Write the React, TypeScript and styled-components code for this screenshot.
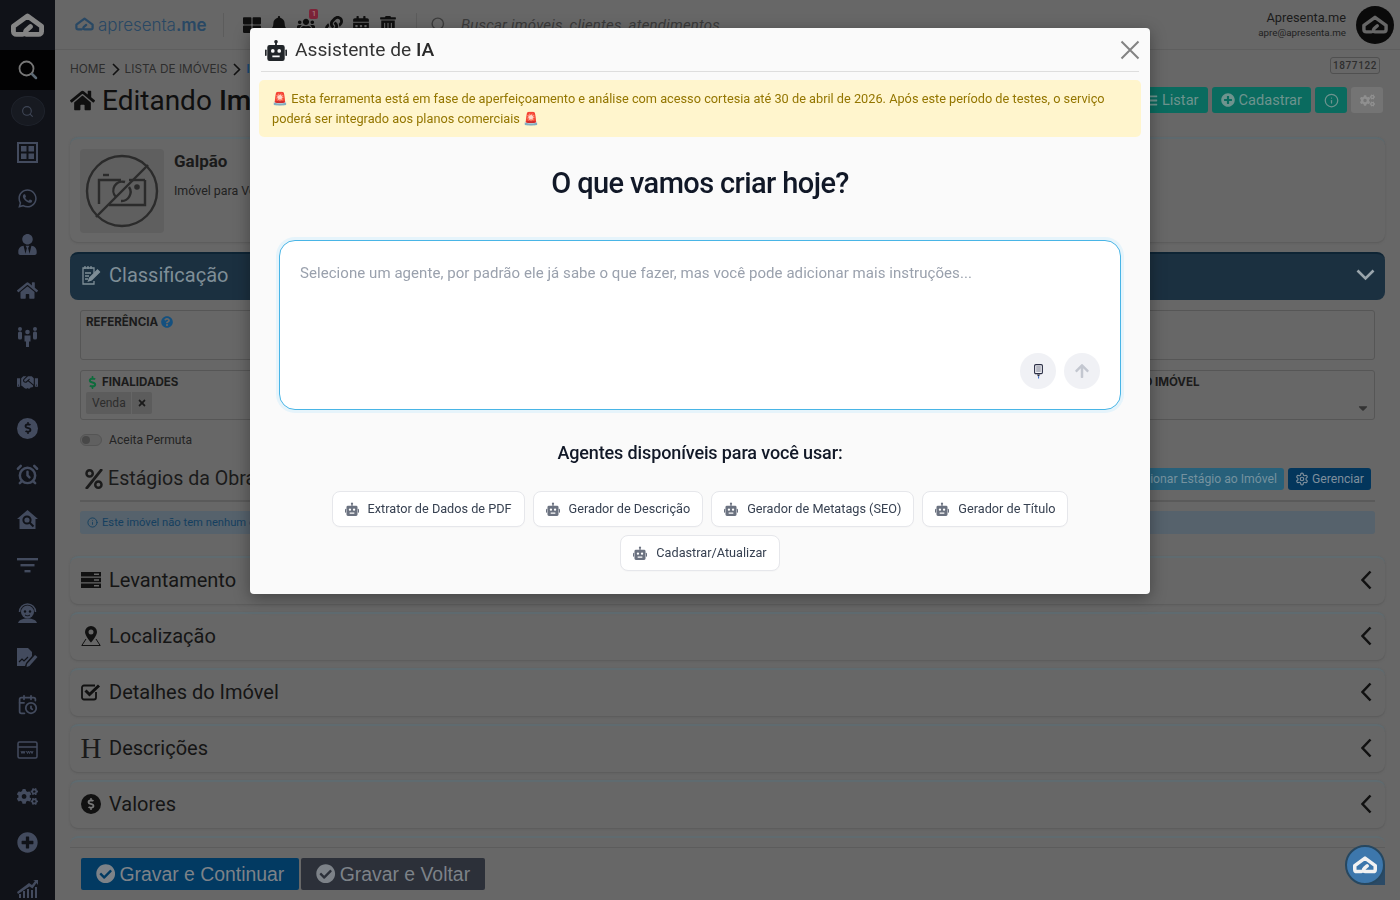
import React from "react";
import styled, { createGlobalStyle } from "styled-components";
import {
  FaHome, FaWhatsapp, FaUserTie, FaHandshake, FaCogs, FaPlusCircle,
  FaBell, FaLink, FaCalendarAlt, FaTrashAlt, FaThLarge, FaUsers, FaCheckCircle,
  FaQuestionCircle, FaDollarSign, FaPercent, FaBars, FaTimes, FaArrowUp, FaCaretDown,
} from "react-icons/fa";
import { LuCalendarClock, LuInfo, LuSettings, LuSearch, LuAlarmClock } from "react-icons/lu";

const Global = createGlobalStyle`
  html, body { margin: 0; padding: 0; height: 900px; overflow: hidden; background: #676767; }
  body { font-family: "Roboto", "Liberation Sans", sans-serif; color: #151515; }
  * { box-sizing: border-box; }
`;

const Shell = styled.div`display: flex; width: 1400px; height: 900px; overflow: hidden;`;

const Sidebar = styled.nav`
  width: 55px; flex: none; height: 900px; overflow: hidden; background: #101218; display: flex; flex-direction: column; align-items: center;
  color: #434b5e;
`;
const SideLogo = styled.div`height: 50px; width: 100%; flex: none; display: flex; align-items: center; justify-content: center; color: #858585;`;
const SideActive = styled.div`height: 40px; width: 100%; flex: none; background: #020203; display: flex; align-items: center; justify-content: center; color: #777;`;
const SideSearch = styled.div`
  width: 34px; height: 30px; flex: none; margin: 6px 0 3px; border-radius: 50%; background: #171a21; border: 1px solid #1f232c;
  display: flex; align-items: center; justify-content: center; color: #3f4656;
`;
const SideItem = styled.div`height: 46px; width: 100%; flex: none; display: flex; align-items: center; justify-content: center; font-size: 21px;`;
const CoinIcon = styled.span<{ $bg: string; $fg: string; $size: number }>`
  width: ${p => p.$size}px; height: ${p => p.$size}px; border-radius: 50%; background: ${p => p.$bg}; color: ${p => p.$fg};
  display: inline-flex; align-items: center; justify-content: center; font-size: ${p => Math.round(p.$size * 0.58)}px; flex: none;
`;

const Main = styled.div`flex: 1; min-width: 0; display: flex; flex-direction: column;`;
const TopBar = styled.header`
  height: 50px; flex: none; display: flex; align-items: center; border-bottom: 1px solid #5e5e5e; padding: 0 6px 0 20px;
`;
const BrandMark = styled.div`display: flex; align-items: center; gap: 4px; color: #294864; width: 148px;`;
const BrandText = styled.span`font-family: "Inter", sans-serif; font-size: 17px; font-weight: 300; letter-spacing: -0.06px;`;
const BrandStrong = styled.b`font-weight: 600;`;
const Divider = styled.span`width: 1px; height: 24px; background: #5c5c5c; flex: none;`;
const TopIcons = styled.div`display: flex; align-items: center; gap: 9.2px; margin: 0 19px; color: #101010; font-size: 18px;`;
const TopIcon = styled.span`position: relative; display: flex; width: 18px; justify-content: center;`;
const TopBadge = styled.span`
  position: absolute; top: -7px; right: -3px; width: 9px; height: 10px; border-radius: 2px; background: #7c2338; color: #a88;
  font-size: 8px; line-height: 10px; text-align: center;
`;
const SearchText = styled.span`font-size: 15px; font-style: italic; color: #3a3a3a; margin-left: 14px; letter-spacing: .2px;`;
const SearchGlyph = styled.span`display: flex; color: #3c3c3c; margin-left: 13px;`;
const Spacer = styled.div`flex: 1;`;
const UserBox = styled.div`text-align: right; margin-right: 10px;`;
const UserName = styled.div`font-size: 12.8px; line-height: 16px; color: #1b1b1b;`;
const UserMail = styled.div`font-size: 9.8px; line-height: 14px; color: #1f1f1f;`;
const Avatar = styled.div`width: 38px; height: 38px; border-radius: 50%; background: #0a0a0a; color: #666; display: flex; align-items: center; justify-content: center;`;

const Content = styled.div`padding: 9px 15px 0; display: flex; flex-direction: column;`;
const CrumbRow = styled.div`display: flex; align-items: center; height: 20px; padding-right: 5px;`;
const Crumb = styled.span<{ $on?: boolean }>`
  font-family: "Inter", sans-serif; font-size: 11.8px; color: ${p => (p.$on ? "#184c78" : "#2d2d2d")}; font-weight: ${p => (p.$on ? 700 : 400)};
  text-transform: uppercase; margin-right: 6px;
`;
const CrumbSep = styled.span`display: flex; color: #111; margin-right: 5px;`;
const CodeTag = styled.span`
  margin: 0 0 8px auto; border: 1px solid #505050; border-radius: 3px; height: 17px; width: 50px; text-align: center; line-height: 15px;
  font-size: 10px; font-weight: 500; color: #2e2e2e; letter-spacing: .6px;
`;
const TitleRow = styled.div`display: flex; align-items: center; height: 36px; margin-top: 3px; padding-right: 2px;`;
const PageTitle = styled.h1`
  margin: 0; display: flex; align-items: center; gap: 7px; font-size: 28px; font-weight: 400; color: #0f0f0f;
  & b { font-weight: 500; }
`;
const ActionGroup = styled.div`margin-left: auto; display: flex; gap: 4px;`;
const ActionBtn = styled.span<{ $bg?: string; $fg?: string; $square?: boolean }>`
  height: 26px; padding: ${p => (p.$square ? "0" : "0 9px")}; width: ${p => (p.$square ? "32px" : "auto")}; justify-content: center;
  border-radius: 3px; background: ${p => p.$bg ?? "#0a6b5f"}; color: ${p => p.$fg ?? "#6e938e"};
  font-size: 14.6px; display: inline-flex; align-items: center; gap: 4px;
`;

const Summary = styled.section`
  margin-top: 19px; height: 105px; flex: none; border-radius: 8px; background: #676767; border-top: 2px solid #5d696e;
  box-shadow: 0 1px 2px #5a5a5a; padding: 10px; display: flex; gap: 10px;
`;
const Photo = styled.div`width: 84px; height: 84px; border-radius: 4px; background: #5f5f5f; color: #2b2b2b; display: flex; align-items: center; justify-content: center;`;
const SummaryName = styled.div`font-size: 17px; font-weight: 700; color: #1a1a1a; margin-top: 2px;`;
const SummarySub = styled.div`font-size: 12.4px; color: #222; margin-top: 12px;`;

const ClassHead = styled.div`
  margin-top: 10px; height: 48px; flex: none; border-radius: 8px; background: #1b3040; border-top: 2px solid #0e2434;
  display: flex; align-items: center; padding: 0 10px 4px 11px; color: #7f8e97; font-size: 20px; gap: 8px;
`;
const HeadChevron = styled.span<{ $fg?: string }>`margin-left: auto; display: flex; color: ${p => p.$fg ?? "#9aa5ac"};`;

const Panel = styled.div`padding: 10px 10px 0; display: flex; flex-direction: column;`;
const Field = styled.div<{ $h?: number }>`
  height: ${p => p.$h ?? 50}px; border: 1px solid #565656; border-radius: 3px; padding: 4px 5px; position: relative;
`;
const FieldRow = styled.div`display: grid; grid-template-columns: 1fr 316px; gap: 10px; margin-top: 10px;`;
const FieldLabel = styled.label`
  font-family: "Inter", sans-serif; font-size: 11.6px; font-weight: 700; color: #1b1b1b; display: flex; align-items: center; gap: 3px; letter-spacing: -.05px;
`;
const Caret = styled.span`position: absolute; right: 4px; bottom: 4px; color: #333; font-size: 14px; display: flex;`;
const Chip = styled.span`
  display: inline-flex; align-items: center; margin-top: 3px; height: 22px; border-radius: 2px; background: #5c5c5c; color: #2c2c2c; font-size: 12px; padding-left: 6px;
`;
const ChipX = styled.span`display: flex; align-items: center; height: 100%; margin-left: 5px; padding: 0 5px; border-left: 1px solid #666; color: #1a1a1a; font-size: 10px;`;
const ToggleRow = styled.div`display: flex; align-items: center; gap: 7px; margin-top: 13px; font-size: 12.1px; color: #232323; height: 14px;`;
const ToggleTrack = styled.span`width: 22px; height: 12px; border: 1px solid #555; border-radius: 7px; background: #606060; padding: 1px;`;
const ToggleKnob = styled.span`display: block; width: 8px; height: 8px; border-radius: 50%; background: #484848;`;
const StageHead = styled.div`
  margin-top: 18px; height: 37px; border-bottom: 2px solid #5a5a5a; display: flex; align-items: center; gap: 4px; font-size: 19.6px; color: #1b1b1b; padding: 0 4px 8px;
`;
const StageBtn = styled.span<{ $bg: string; $fg: string; $ml?: string }>`
  height: 22px; margin-top: 1px; border-radius: 3px; background: ${p => p.$bg}; color: ${p => p.$fg}; font-size: 12.2px; padding: 0 7px;
  display: inline-flex; align-items: center; gap: 3px; margin-left: ${p => p.$ml ?? "0"};
`;
const StageNote = styled.div`
  margin-top: 9px; height: 23px; border-radius: 3px; background: #56626c; color: #153f5f; font-size: 11.2px; display: flex; align-items: center; gap: 4px; padding: 0 7px 1px;
`;
const Accordion = styled.div`margin-top: 22px; display: flex; flex-direction: column; gap: 8px;`;
const AccRow = styled.div`
  height: 48px; flex: none; border-radius: 8px; border-top: 2px solid #5f6b70; box-shadow: 0 1px 2px #5a5a5a; background: #676767;
  display: flex; align-items: center; gap: 8px; padding: 0 13px 3px 11px; font-size: 20px; color: #151515;
`;
const AccIcon = styled.span`width: 20px; display: flex; justify-content: center; color: #111;`;
const SerifH = styled.span`font-family: "Liberation Serif", serif; font-size: 29px; line-height: 20px; color: #1a1a1a;`;
const Footer = styled.div`
  margin-top: 8px; height: 80px; flex: none; border-radius: 8px; border-top: 2px solid #5f6b70; padding-top: 9px;
`;
const FooterInner = styled.div`border-top: 1px solid #5c5c5c; height: 70px; padding: 10px 11px; display: flex; gap: 2px;`;
const SaveBtn = styled.span<{ $bg: string }>`
  height: 32px; border-radius: 2px; background: ${p => p.$bg}; color: #7d8288; font-family: "Liberation Sans", sans-serif; font-size: 19.4px;
  padding: 0 15px; display: inline-flex; align-items: center; gap: 4px;
`;
const Floating = styled.div`
  position: fixed; left: 1345px; top: 845px; width: 40px; height: 40px; border-radius: 50%; background: #3d77ac; border: 2px solid #264760; color: #f2f2f2;
  display: flex; align-items: center; justify-content: center;
`;
const FloatingCorner = styled.div`position: fixed; left: 1365px; top: 865px; width: 20px; height: 20px; background: #2a4a66;`;

const Backdrop = styled.div`position: fixed; inset: 0; display: flex; justify-content: center; align-items: flex-start; padding-top: 28px;`;
const Modal = styled.div`
  width: 900px; height: 566px; background: #fafafa; border-radius: 4px; box-shadow: 0 4px 16px rgba(0,0,0,.35); padding: 0 9px; display: flex; flex-direction: column;
`;
const ModalHead = styled.div`
  height: 44px; margin: 0 2px; border-bottom: 1px solid #dedede; display: flex; align-items: center; gap: 8px; padding: 0 0 0 4px;
  font-size: 19.2px; color: #333; flex: none;
  & b { font-weight: 500; color: #2a2a2a; }
`;
const RobotTitle = styled.span`display: flex; color: #212529;`;
const CloseBtn = styled.span`margin-left: auto; display: flex; color: #838383; margin-right: -1px;`;
const Alert = styled.div`
  margin-top: 8px; height: 57px; background: #fff5cd; border-radius: 5px; color: #947600; font-size: 12.75px; line-height: 20px; padding: 9px 13px; flex: none;
`;
const Heading = styled.h2`
  margin: 27px 0 0; text-align: center; font-size: 29px; line-height: 38px; font-weight: 500; color: #111827; letter-spacing: -.6px;
`;
const Composer = styled.div`
  margin: 38px 20px 0; height: 170px; border: 1px solid #49b5e6; border-radius: 16px; background: #fff; box-shadow: 0 0 0 3px #e6f4fb; position: relative; flex: none;
`;
const Prompt = styled.textarea`
  display: block; width: 100%; height: 100%; border: 0; outline: 0; resize: none; background: transparent; padding: 22px 20px;
  font-family: "Roboto", sans-serif; font-size: 15px; line-height: 20px; border-radius: 16px; letter-spacing: .06px;
  &::placeholder { color: #9aa1ad; opacity: 1; }
`;
const ComposerTools = styled.div`position: absolute; right: 20px; bottom: 20px; display: flex; gap: 8px;`;
const RoundBtn = styled.span<{ $fg: string }>`
  width: 36px; height: 36px; border-radius: 50%; background: #f0f1f5; color: ${p => p.$fg}; display: flex; align-items: center; justify-content: center; font-size: 16px;
`;
const Subheading = styled.h3`margin: 32px 0 0; text-align: center; font-size: 18px; line-height: 22px; font-weight: 500; color: #111827; letter-spacing: -.13px;`;
const AgentList = styled.div`margin: 27px 60px 0; display: flex; flex-wrap: wrap; justify-content: center; gap: 8px;`;
const AgentBtn = styled.button`
  height: 36px; padding: 0 12px; background: #fff; border: 1px solid #e6e7eb; border-radius: 8px; display: inline-flex; align-items: center; gap: 9px;
  font-family: "Roboto", sans-serif; font-size: 12.7px; color: #374151; box-shadow: 0 1px 1px rgba(0,0,0,.02);
  & svg { color: #6b7280; }
`;
const AgentLabel = styled.span`position: relative; top: -1px;`;

const Robot = ({ size }: { size: number }) => (
  <svg width={size} height={size} viewBox="0 0 24 24" fill="currentColor">
    <path fillRule="evenodd" d="M12 1a2 2 0 0 1 1 3.700V6.500h6A2.500 2.500 0 0 1 21.500 9v12.500A2.500 2.500 0 0 1 19 24H5a2.500 2.500 0 0 1-2.500-2.500V9A2.500 2.500 0 0 1 5 6.500h6V4.700A2 2 0 0 1 12 1zM8.500 11a2 2 0 1 0 0 4 2 2 0 0 0 0-4zm7 0a2 2 0 1 0 0 4 2 2 0 0 0 0-4zM8 18v2h8v-2z" />
    <rect x="0" y="11.500" width="1.800" height="7" rx=".8" /><rect x="22.200" y="11.500" width="1.800" height="7" rx=".8" />
  </svg>
);
const Logo = ({ size, stroke = 5 }: { size: number; stroke?: number }) => (
  <svg width={size} height={size * 0.74} viewBox="0 0 34 25" fill="none" stroke="currentColor" strokeWidth={stroke} strokeLinejoin="round" strokeLinecap="round">
    <path d="M12 22H5.500a3 3 0 0 1-3-3v-5.500L17 3l14.500 10.500V19a3 3 0 0 1-3 3H17c-2 0-3-2.500-1-4.500l4-3.500" />
  </svg>
);
const SearchOutline = () => (
  <svg width="20" height="20" viewBox="0 0 20 20" fill="none"><circle cx="8.500" cy="8.500" r="7" stroke="#777" strokeWidth="1.800" /><path d="M14 14l4 4" stroke="#5d6a75" strokeWidth="2.500" strokeLinecap="round" /></svg>
);
const FilterGlyph = () => (
  <svg width="21" height="16" viewBox="0 0 21 16" fill="currentColor"><rect width="21" height="2.400" /><rect x="3.500" y="6" width="14" height="2.400" /><rect x="7.500" y="12" width="6" height="2.400" /></svg>
);
const WebGlyph = () => (
  <svg width="21" height="18" viewBox="0 0 21 18" fill="none" stroke="currentColor" strokeWidth="1.500"><rect x="1" y="1" width="19" height="16" rx="1.500" /><path d="M1 6h19" /><path d="M4 10l1 2.500 1-2.500 1 2.500 1-2.500M9.500 10l1 2.500 1-2.500 1 2.500 1-2.500M14 10l1 2.500 1-2.500" strokeWidth="1" /></svg>
);
const HomeSearch = () => (
  <svg width="21" height="20" viewBox="0 0 21 20"><path fill="currentColor" d="M10.500 0L21 9h-2.500v10h-16V9H0z" /><circle cx="10" cy="10" r="3.600" fill="none" stroke="#101218" strokeWidth="2" /><path d="M12.500 12.500l4 4" stroke="#101218" strokeWidth="2" /></svg>
);
const GridGlyph = () => (
  <svg width="21" height="21" viewBox="0 0 21 21" fill="none" stroke="currentColor" strokeWidth="2"><rect x="1" y="1" width="19" height="19" /><rect x="4" y="4" width="5.500" height="5.500" fill="currentColor" stroke="none" /><rect x="11.500" y="4" width="5.500" height="5.500" fill="currentColor" stroke="none" /><rect x="4" y="11.500" width="5.500" height="5.500" fill="currentColor" stroke="none" /><rect x="11.500" y="11.500" width="5.500" height="5.500" fill="currentColor" stroke="none" /></svg>
);
const PeopleGlyph = () => (
  <svg width="21" height="21" viewBox="0 0 21 21" fill="currentColor">
    <circle cx="3" cy="3" r="2" /><rect x="1" y="5.500" width="4" height="8" rx="1.500" /><circle cx="18" cy="3" r="2" /><rect x="16" y="5.500" width="4" height="8" rx="1.500" />
    <circle cx="10.500" cy="6" r="2.300" /><path d="M7.500 9.500h6v6h-1.500v5.500h-3v-5.500H7.500z" />
  </svg>
);
const HeadsetFace = () => (
  <svg width="21" height="21" viewBox="0 0 21 21"><path d="M2.500 10a8 8 0 0 1 16 0" fill="none" stroke="currentColor" strokeWidth="1.500" /><circle cx="10.500" cy="10" r="6.500" fill="currentColor" /><circle cx="8" cy="9.500" r="1.200" fill="#101218" /><circle cx="13" cy="9.500" r="1.200" fill="#101218" /><path d="M8 13c1.500 1 3.500 1 5 0" stroke="#101218" fill="none" /><path d="M1 21c1-3 4-4.500 9.500-4.500S19 18 20 21z" fill="currentColor" /></svg>
);
const ChartEdit = () => (
  <svg width="21" height="20" viewBox="0 0 21 20"><path fill="currentColor" d="M0 0h11l4 4v4l-6 7-1 3H0z" /><path d="M2 14l3-3 2 2 4-4" stroke="#101218" strokeWidth="1.200" fill="none" /><path d="M10 16l8-9 2.500 2-8 9-3 1z" fill="currentColor" /></svg>
);
const GrowthChart = () => (
  <svg width="21" height="19" viewBox="0 0 21 19" fill="currentColor"><path d="M0 13L12 4l3 2 3-4-2-1h5v5l-1.500-2-4 5.500-3-2L1 15z" /><rect x="2" y="15" width="2" height="4" /><rect x="6" y="12" width="2" height="7" /><rect x="10" y="10" width="2" height="9" /><rect x="14" y="11" width="2" height="8" /><rect x="18" y="8" width="2" height="11" /></svg>
);
const NoteGlyph = () => (
  <svg width="20" height="20" viewBox="0 0 20 20" fill="none" stroke="currentColor" strokeWidth="1.300"><path d="M13 8V3H2v16h11v-3" /><path d="M4 1v3M7 1v3M10 1v3" /><path d="M4 8h6M4 11h4M4 14h3" /><path d="M7.500 16l1-3 8-8 2 2-8 8z" fill="currentColor" /></svg>
);
const NoPhoto = () => (
  <svg width="74" height="74" viewBox="0 0 74 74" fill="none" stroke="currentColor" strokeWidth="2.400">
    <circle cx="37" cy="37" r="35" /><path d="M11 63L63 11" />
    <path d="M14 50V26h22M60 26v25H24" /><path d="M18 21h6" /><path d="M44 26h16" />
    <path d="M31 43a9 9 0 0 1 9-15M44 33a9 9 0 0 1-8 14" /><circle cx="52" cy="33" r="1.600" fill="currentColor" />
  </svg>
);
const ChevronDown = () => (
  <svg width="19" height="12" viewBox="0 0 19 12" fill="none" stroke="currentColor" strokeWidth="2.600"><path d="M1.500 1.500l8 8 8-8" /></svg>
);
const ChevronLeft = () => (
  <svg width="11" height="20" viewBox="0 0 11 20" fill="none" stroke="currentColor" strokeWidth="2.500"><path d="M9.500 1.500L1.500 10l8 8.500" /></svg>
);
const ChevronRight = () => (
  <svg width="8" height="13" viewBox="0 0 8 13" fill="none" stroke="currentColor" strokeWidth="1.600"><path d="M1 1l5.500 5.500L1 12" /></svg>
);
const Cross = () => (
  <svg width="20" height="20" viewBox="0 0 20 20" fill="none" stroke="currentColor" strokeWidth="2"><path d="M1.500 1.500l17 17M18.500 1.500l-17 17" /></svg>
);
const StackGlyph = () => (
  <svg width="20" height="16" viewBox="0 0 20 16" fill="currentColor" fillRule="evenodd"><path d="M0 0h20v4.500H0zM13 1.500v1.500h5V1.500zM0 5.700h20v4.500H0zM13 7.200v1.500h5V7.200zM0 11.500h20V16H0zM13 13v1.500h5V13z" /></svg>
);
const PinGlyph = () => (
  <svg width="20" height="20" viewBox="0 0 20 20"><path fillRule="evenodd" fill="currentColor" d="M10 0a6 6 0 0 1 6 6c0 4-6 10.500-6 10.500S4 10 4 6a6 6 0 0 1 6-6zm0 3.500a2.500 2.500 0 1 0 0 5 2.500 2.500 0 0 0 0-5z" /><path d="M5 13L.8 19.500h18.400L15 13" fill="none" stroke="currentColor" strokeWidth="1" /></svg>
);
const CheckBoxGlyph = () => (
  <svg width="20" height="18" viewBox="0 0 20 18" fill="none"><path d="M15 9v5.500a2 2 0 0 1-2 2H3a2 2 0 0 1-2-2v-10a2 2 0 0 1 2-2h11" stroke="currentColor" strokeWidth="1.800" /><path d="M4.500 7.500l4 4L18 2.500" stroke="currentColor" strokeWidth="3" /></svg>
);
const MicGlyph = () => (
  <svg width="9" height="15" viewBox="0 0 9 15"><rect x=".6" y=".6" width="7.800" height="9" rx="1.200" fill="#f4f4f8" stroke="#2b2f45" strokeWidth="1.100" /><path d="M2.200 3h4.600M2.200 5h4.600M2.200 7h4.600" stroke="#555a70" strokeWidth=".8" /><path d="M3 10.500h3l-1 2h-1z" fill="#2b2f45" /><rect x="4" y="12.500" width="1.100" height="2" fill="#3d6fd0" /></svg>
);

const sideIcons: React.ReactNode[] = [
  <GridGlyph />, <FaWhatsapp />, <FaUserTie />, <FaHome />, <PeopleGlyph />, <FaHandshake />,
  <CoinIcon $bg="#434b5e" $fg="#101218" $size={21}><FaDollarSign /></CoinIcon>,
  <LuAlarmClock size={23} strokeWidth={2.600} />, <HomeSearch />, <FilterGlyph />, <HeadsetFace />, <ChartEdit />, <LuCalendarClock />, <WebGlyph />, <FaCogs />, <FaPlusCircle />, <GrowthChart />,
];
const agents = ["Extrator de Dados de PDF", "Gerador de Descrição", "Gerador de Metatags (SEO)", "Gerador de Título", "Cadastrar/Atualizar"];
const sections: { label: string; icon: React.ReactNode }[] = [
  { label: "Levantamento", icon: <StackGlyph /> },
  { label: "Localização", icon: <PinGlyph /> },
  { label: "Detalhes do Imóvel", icon: <CheckBoxGlyph /> },
  { label: "Descrições", icon: <SerifH>H</SerifH> },
  { label: "Valores", icon: <CoinIcon $bg="#111" $fg="#777" $size={20}><FaDollarSign /></CoinIcon> },
];

export default function App() {
  return (
    <>
      <Global />
      <Shell>
        <Sidebar>
          <SideLogo><Logo size={33} /></SideLogo>
          <SideActive><SearchOutline /></SideActive>
          <SideSearch><LuSearch size={13} /></SideSearch>
          {sideIcons.map((icon, i) => <SideItem key={i}>{icon}</SideItem>)}
        </Sidebar>
        <Main>
          <TopBar>
            <BrandMark>
              <Logo size={19} stroke={4} />
              <BrandText>apresenta<BrandStrong>.me</BrandStrong></BrandText>
            </BrandMark>
            <Divider />
            <TopIcons>
              <TopIcon><FaThLarge /></TopIcon>
              <TopIcon><FaBell /></TopIcon>
              <TopIcon><FaUsers /><TopBadge>1</TopBadge></TopIcon>
              <TopIcon><FaLink /></TopIcon>
              <TopIcon><FaCalendarAlt /></TopIcon>
              <TopIcon><FaTrashAlt /></TopIcon>
            </TopIcons>
            <Divider />
            <SearchGlyph><LuSearch size={17} /></SearchGlyph>
            <SearchText>Buscar imóveis, clientes, atendimentos...</SearchText>
            <Spacer />
            <UserBox>
              <UserName>Apresenta.me</UserName>
              <UserMail>apre@apresenta.me</UserMail>
            </UserBox>
            <Avatar><Logo size={26} stroke={4.500} /></Avatar>
          </TopBar>
          <Content>
            <CrumbRow>
              <Crumb>Home</Crumb><CrumbSep><ChevronRight /></CrumbSep>
              <Crumb>Lista de Imóveis</Crumb><CrumbSep><ChevronRight /></CrumbSep>
              <Crumb $on>Imóvel</Crumb>
              <CodeTag>1877122</CodeTag>
            </CrumbRow>
            <TitleRow>
              <PageTitle><FaHome size={25} />Editando <b>Imóvel</b></PageTitle>
              <ActionGroup>
                <ActionBtn><FaBars size={13} />Listar</ActionBtn>
                <ActionBtn><FaPlusCircle size={14} />Cadastrar</ActionBtn>
                <ActionBtn $square><LuInfo size={15} /></ActionBtn>
                <ActionBtn $square $bg="#747474" $fg="#8f8f8f"><FaCogs size={15} /></ActionBtn>
              </ActionGroup>
            </TitleRow>
            <Summary>
              <Photo><NoPhoto /></Photo>
              <div>
                <SummaryName>Galpão</SummaryName>
                <SummarySub>Imóvel para Venda</SummarySub>
              </div>
            </Summary>
            <ClassHead>
              <NoteGlyph />Classificação
              <HeadChevron><ChevronDown /></HeadChevron>
            </ClassHead>
            <Panel>
              <Field>
                <FieldLabel>REFERÊNCIA <FaQuestionCircle color="#14507f" size={12} /></FieldLabel>
              </Field>
              <FieldRow>
                <Field>
                  <FieldLabel><FaDollarSign color="#0e6b3c" size={13} />FINALIDADES</FieldLabel>
                  <Chip>Venda<ChipX><FaTimes /></ChipX></Chip>
                </Field>
                <Field>
                  <FieldLabel>CATEGORIA DO IMÓVEL</FieldLabel>
                  <Caret><FaCaretDown /></Caret>
                </Field>
              </FieldRow>
              <ToggleRow><ToggleTrack><ToggleKnob /></ToggleTrack>Aceita Permuta</ToggleRow>
              <StageHead>
                <FaPercent size={20} />Estágios da Obra
                <StageBtn $bg="#27607a" $fg="#75929f" $ml="auto">Adicionar Estágio ao Imóvel</StageBtn>
                <StageBtn $bg="#03365c" $fg="#7f8f9c"><LuSettings size={14} />Gerenciar</StageBtn>
              </StageHead>
              <StageNote><LuInfo size={11} />Este imóvel não tem nenhum estágio cadastrado.</StageNote>
            </Panel>
            <Accordion>
              {sections.map(s => (
                <AccRow key={s.label}>
                  <AccIcon>{s.icon}</AccIcon>{s.label}
                  <HeadChevron $fg="#111"><ChevronLeft /></HeadChevron>
                </AccRow>
              ))}
            </Accordion>
            <Footer>
              <FooterInner>
                <SaveBtn $bg="#023a62"><FaCheckCircle />Gravar e Continuar</SaveBtn>
                <SaveBtn $bg="#2c3039"><FaCheckCircle />Gravar e Voltar</SaveBtn>
              </FooterInner>
            </Footer>
          </Content>
        </Main>
      </Shell>
      <FloatingCorner />
      <Floating><Logo size={24} stroke={5} /></Floating>
      <Backdrop>
        <Modal>
          <ModalHead>
            <RobotTitle><Robot size={22} /></RobotTitle>
            <span>Assistente de <b>IA</b></span>
            <CloseBtn><Cross /></CloseBtn>
          </ModalHead>
          <Alert>
            🚨 Esta ferramenta está em fase de aperfeiçoamento e análise com acesso cortesia até 30 de abril de 2026. Após este período de testes, o serviço poderá ser integrado aos planos comerciais 🚨
          </Alert>
          <Heading>O que vamos criar hoje?</Heading>
          <Composer>
            <Prompt placeholder="Selecione um agente, por padrão ele já sabe o que fazer, mas você pode adicionar mais instruções..." />
            <ComposerTools>
              <RoundBtn $fg="#374151"><MicGlyph /></RoundBtn>
              <RoundBtn $fg="#c3c7d0"><FaArrowUp /></RoundBtn>
            </ComposerTools>
          </Composer>
          <Subheading>Agentes disponíveis para você usar:</Subheading>
          <AgentList>
            {agents.map(a => <AgentBtn key={a}><Robot size={14} /><AgentLabel>{a}</AgentLabel></AgentBtn>)}
          </AgentList>
        </Modal>
      </Backdrop>
    </>
  );
}
